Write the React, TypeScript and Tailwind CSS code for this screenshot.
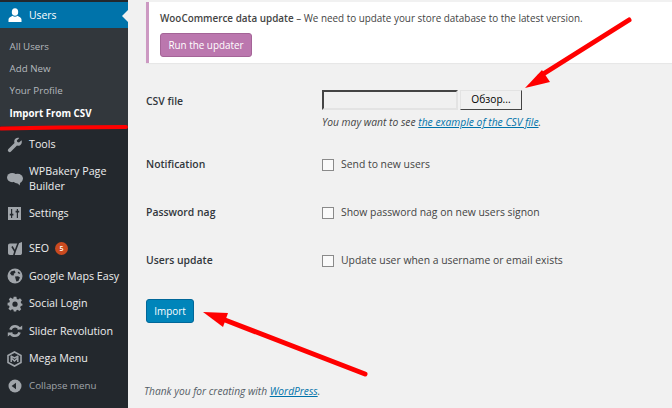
import type { ReactNode } from "react";

const font = "font-['Open_Sans','Noto_Sans',sans-serif]";

// dashicon style glyphs, all on a 16 box
const UsersIcon = () => (
  <svg width="16" height="16" viewBox="0 0 16 16" fill="currentColor">
    <ellipse cx="8" cy="5" rx="3.2" ry="3.8" />
    <path d="M1.5 15 V12.5 C1.5 10.5 4 9.7 5.6 8.8 C6.8 10 9.2 10 10.4 8.8 C12 9.7 14.5 10.5 14.5 12.5 V15 Z" />
  </svg>
);
const WrenchIcon = () => (
  <svg width="16" height="16" viewBox="0 0 16 16" fill="currentColor">
    <path d="M14.6 3.2 L12 5.6 L10.3 5 L9.8 3.4 L12.3 1 C10.3 0.3 8 1.2 7.4 3.2 C7.1 4.2 7.2 5 7.5 5.9 L1.4 11.9 C0.6 12.7 0.7 13.8 1.4 14.6 C2.2 15.3 3.3 15.3 4 14.6 L10 8.5 C11 8.8 11.9 8.8 12.8 8.4 C14.6 7.7 15.3 5.2 14.6 3.2 Z" />
  </svg>
);
const BubbleIcon = () => (
  <svg width="16" height="14" viewBox="0 0 16 14" fill="currentColor">
    <ellipse cx="5.2" cy="5.6" rx="5.2" ry="4.6" />
    <ellipse cx="10.6" cy="6.6" rx="5.4" ry="4.8" />
    <path d="M7.5 9 L13.6 9 L12.6 13.6 L10.4 11 Z" />
  </svg>
);
const SettingsIcon = () => (
  <svg width="13" height="13" viewBox="0 0 13 13">
    <rect width="13" height="13" fill="#a0a5aa" />
    <path d="M3.6 2 V11 M9.4 2 V11" stroke="#23282d" strokeWidth="1.2" />
    <path d="M1.8 7.6 H5.4 M7.6 4.6 H11.2" stroke="#23282d" strokeWidth="1.8" />
  </svg>
);
const YoastIcon = () => (
  <svg width="14" height="16" viewBox="0 0 14 16">
    <path d="M2 2.5 H10 L14 1 V12 C14 13.5 13 14 12 14 H2 C0.8 14 0 13.2 0 12 V4.5 C0 3.3 0.8 2.5 2 2.5 Z" fill="#a0a5aa" />
    <path d="M4 5.5 L7 10.5 L5.6 15 M10.6 1 L7 10.5" stroke="#23282d" strokeWidth="1.6" fill="none" />
  </svg>
);
const GlobeIcon = () => (
  <svg width="16" height="16" viewBox="0 0 16 16">
    <circle cx="8" cy="8" r="7.5" fill="#a0a5aa" />
    <path d="M4 3.4 L7.6 2.6 L8.6 4.4 L6.6 6 L7.2 7.2 L4.8 7.6 L3 5.6 Z M8 8.6 L11 8.2 L13 9.6 L11.4 13 L9.4 13.6 L8.6 11 Z M11 3.6 L13.4 5 L12.4 6 L10.8 5 Z" fill="#23282d" />
  </svg>
);
const GearIcon = () => (
  <svg width="16" height="16" viewBox="0 0 16 16">
    <path d="M6.6 0.8 H9.4 L9.8 2.9 L11.2 3.5 L13 2.3 L14.9 4.2 L13.7 6 L14.3 7.4 L15.4 7.8 V9.6 L13.8 10 L13.2 11.4 L14.2 13.2 L12.4 15 L10.6 13.8 L9.4 14.2 L9.2 15.6 H6.8 L6.4 13.8 L5 13.2 L3.4 14.6 L1.4 12.8 L2.6 11 L2 9.6 L0.6 9.4 V6.8 L2.4 6.4 L2.9 5 L1.8 3.2 L3.6 1.6 L5.4 2.8 L6.4 2.4 Z" fill="#a0a5aa" />
    <circle cx="8" cy="8.2" r="2.6" fill="#23282d" />
  </svg>
);
const SliderIcon = () => (
  <svg width="16" height="14" viewBox="0 0 16 14" fill="none">
    <path d="M3.4 5.6 C4.2 3.4 6 2.2 8 2.2 C10 2.2 11.4 3.2 12.4 4.8 M12.6 8.4 C11.8 10.6 10 11.8 8 11.8 C6 11.8 4.6 10.8 3.6 9.2" stroke="#a0a5aa" strokeWidth="2.6" />
    <path d="M10 5.6 H15.2 V1.6 Z M6 8.4 H0.8 V12.4 Z" fill="#a0a5aa" />
  </svg>
);
const MegaIcon = () => (
  <svg width="15" height="16" viewBox="0 0 15 16" fill="none" stroke="#a0a5aa">
    <path d="M7.5 1 L14 4.5 V11.5 L7.5 15 L1 11.5 V4.5 Z" strokeWidth="1.6" />
    <path d="M3.6 5 L7.5 7 L11.4 5 M4.2 11 V7 L7.5 10 L10.8 7 V11" strokeWidth="1.5" />
  </svg>
);
const CollapseIcon = () => (
  <svg width="14" height="14" viewBox="0 0 14 14">
    <circle cx="7" cy="7" r="6.5" fill="#a0a5aa" />
    <path d="M3.6 7 L8 3.8 V10.2 Z" fill="#23282d" />
  </svg>
);

function MenuItem({ icon, children, className = "h-[27.5px]" }: { icon: ReactNode; children: ReactNode; className?: string }) {
  return (
    <div className={`flex items-center text-[10.7px] leading-[15px] text-[#eee] ${className}`}>
      <div className="w-[29px] flex justify-center text-[#a0a5aa] shrink-0">{icon}</div>
      <div>{children}</div>
    </div>
  );
}

function CheckRow({ label, text }: { label: string; text: string }) {
  return (
    <div className="flex items-center h-[16px]">
      <div className="w-[176px] text-[10.4px] font-semibold text-[#32373c]">{label}</div>
      <div className="w-[12px] h-[12px] border border-[#8a8a8a] bg-[#fafafa] mr-[7px] shrink-0" />
      <div className="text-[10.4px] text-[#444]">{text}</div>
    </div>
  );
}

export default function App() {
  return (
    <div className={`relative flex w-[672px] h-[408px] overflow-hidden bg-[#f1f1f1] ${font}`}>
      {/* Sidebar */}
      <aside className="w-[128px] h-full bg-[#23282d] shrink-0 pt-[2px]">
        <div className="relative flex items-center h-[26px] bg-[#0073aa] text-white text-[10.4px]">
          <div className="w-[29px] flex justify-center">
            <UsersIcon />
          </div>
          <span className="pt-[2px]">Users</span>
          <div className="absolute right-0 top-[8px] border-y-[6px] border-y-transparent border-r-[6px] border-r-[#f1f1f1]" />
        </div>
        <div className="bg-[#32373c] h-[98px] pt-[8px] pl-[9.5px] text-[9.75px] text-[#b4b9be]">
          <div className="h-[22px] leading-[22px]">All Users</div>
          <div className="h-[22px] leading-[22px]">Add New</div>
          <div className="h-[22px] leading-[22px]">Your Profile</div>
          <div className="h-[22px] leading-[24px] font-bold text-white">Import From CSV</div>
        </div>
        <div className="pt-[5px]">
          <MenuItem icon={<WrenchIcon />}>Tools</MenuItem>
          <MenuItem icon={<BubbleIcon />} className="h-[41.5px]">
            WPBakery Page
            <br />
            Builder
          </MenuItem>
          <MenuItem icon={<SettingsIcon />}>Settings</MenuItem>
          <div className="h-[7.5px]" />
          <MenuItem icon={<YoastIcon />}>
            <span className="flex items-center gap-[6px]">
              SEO
              <span className="w-[13px] h-[13px] rounded-full bg-[#ca4a1f] text-white text-[7px] font-semibold flex items-center justify-center">5</span>
            </span>
          </MenuItem>
          <MenuItem icon={<GlobeIcon />}>Google Maps Easy</MenuItem>
          <MenuItem icon={<GearIcon />}>Social Login</MenuItem>
          <MenuItem icon={<SliderIcon />}>Slider Revolution</MenuItem>
          <MenuItem icon={<MegaIcon />}>Mega Menu</MenuItem>
          <div className="flex items-center h-[27px] text-[9.75px] text-[#a0a5aa]">
            <div className="w-[29px] flex justify-center">
              <CollapseIcon />
            </div>
            Collapse menu
          </div>
        </div>
      </aside>

      {/* Content */}
      <main className="flex-1 pl-[16px] flex flex-col">
        <div className="mt-[2px] ml-[2px] h-[61px] bg-white border-l-[3px] border-l-[#cc99c2] shadow-[0_1px_1px_rgba(0,0,0,0.04)] pl-[11px] pt-[9px]">
          <div className="text-[9.9px] leading-[15px] text-[#444]">
            <span className="font-semibold">WooCommerce data update</span> – We need to update your store database to the latest version.
          </div>
          <div className="mt-[7px] w-[92px] h-[24px] rounded-[3px] border border-[#a46497] bg-[#bb77ae] text-white text-[9.9px] flex items-center justify-center">
            Run the updater
          </div>
        </div>

        <div className="pl-[2px] mt-[27px]">
          <div className="flex items-start">
            <div className="w-[176px] text-[10.4px] font-semibold text-[#32373c] leading-[23px]">CSV file</div>
            <div>
              <div className="flex h-[20px]">
                <div className="w-[136px] bg-[#f0f0f0] border-l-2 border-t-2 border-l-[#444] border-t-[#444] border-r-2 border-b-2 border-r-[#e3e3e3] border-b-[#e3e3e3]" />
                <div className="w-[62px] ml-[2px] bg-[#f0f0f0] border border-[#e3e3e3] border-r-[#444] border-b-[#444] text-[10.2px] text-black flex items-center justify-center">
                  Обзор...
                </div>
              </div>
              <div className="mt-[5px] text-[10.3px] leading-[14px] italic text-[#444]">
                You may want to see <span className="text-[#0073aa] underline">the example of the CSV file</span>.
              </div>
            </div>
          </div>
          <div className="mt-[28px] flex flex-col gap-[32px]">
            <CheckRow label="Notification" text="Send to new users" />
            <CheckRow label="Password nag" text="Show password nag on new users signon" />
            <CheckRow label="Users update" text="Update user when a username or email exists" />
          </div>
          <div className="mt-[30px] w-[48px] h-[24px] rounded-[3px] bg-[#0085ba] border border-[#006799] text-white text-[9.9px] flex items-center justify-center">
            Import
          </div>
        </div>
        <div className="mt-[auto] mb-[9px] text-[10.2px] italic text-[#555d66]">
          Thank you for creating with <span className="text-[#0073aa] underline">WordPress</span>.
        </div>
      </main>

      {/* Red annotations drawn over the screenshot */}
      <svg className="absolute inset-0 pointer-events-none" width="672" height="408" viewBox="0 0 672 408">
        <path d="M1 128.5 L60 127.5 L126 127" stroke="#f00" strokeWidth="4" strokeLinecap="round" fill="none" />
        <path d="M629 20 L540 76" stroke="#f00" strokeWidth="5" strokeLinecap="round" fill="none" />
        <path d="M525 88 L542 70 L550 82 Z" fill="#f00" />
        <path d="M365 374 L225 320" stroke="#f00" strokeWidth="5" strokeLinecap="round" fill="none" />
        <path d="M203 312 L228 313 L223 327 Z" fill="#f00" />
      </svg>
    </div>
  );
}
